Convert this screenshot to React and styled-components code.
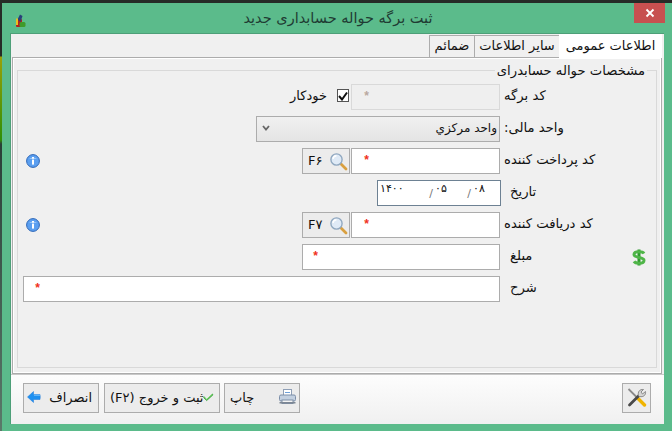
import React from 'react';
import styled, { createGlobalStyle } from 'styled-components';

const FONT = `"DejaVu Sans", "Noto Sans", sans-serif`;

const Global = createGlobalStyle`
  html, body { margin: 0; padding: 0; width: 672px; height: 431px; overflow: hidden; }
  body {
    background: linear-gradient(180deg, #262b27 0 56px, #9aa008 57px, #2f8f08 140px, #2a3f38 144px, #5a7a6a 100%);
    font-family: ${FONT};
  }
  * { box-sizing: border-box; }
`;

const Win = styled.div`
  margin: 3px 0 0 2px; width: 670px; height: 428px; background: #5bbb8b;
  display: flex; flex-direction: column; padding: 0 8px 7px 8px;
`;
const TitleBar = styled.div`
  height: 30px; flex: none; display: grid; grid-template-columns: 40px 1fr 40px; align-items: center; position: relative;
`;
const IconSlot = styled.div`
  display: flex; align-items: center; padding: 5px 0 0 5px;
`;
const Title = styled.div`
  text-align: center; direction: rtl; font-size: 14.5px; color: #1f3b33; padding-bottom: 1px; margin-left: 2px; white-space: nowrap;
`;
const Close = styled.div`
  position: absolute; right: -1px; top: 0; width: 31px; height: 20px; background: #c75050; color: #fff;
  display: flex; align-items: center; justify-content: center;
`;
const Client = styled.div`
  flex: 1; background: #f0f0f0; border-top: 1px solid #4d9f78; border-left: 1px solid #4d9f78;
  display: flex; flex-direction: column; min-height: 0;
`;
const TabArea = styled.div`
  padding: 0 2px 0 1px; flex: none; height: 340px; display: flex; flex-direction: column;
`;
const TabStrip = styled.div`
  height: 23px; flex: none; display: flex; direction: rtl; align-items: flex-end;
`;
const Tab = styled.div`
  height: ${p => (p.$active ? 24 : 22)}px; width: ${p => p.$width}px; margin-bottom: ${p => (p.$active ? -1 : 0)}px;
  background: ${p => (p.$active ? '#ffffff' : '#f0f0f0')}; position: relative; z-index: ${p => (p.$active ? 2 : 1)};
  border: 1px solid ${p => (p.$active ? '#ffffff' : '#acacac')}; border-bottom: none; border-right-width: ${p => (p.$active ? 1 : 0)}px;
  font-size: 13px; color: #111; display: flex; align-items: center; justify-content: center; white-space: nowrap; padding-bottom: 3px;
`;
const TabBody = styled.div`
  flex: 1; background: #f0f0f0; border: 1px solid #acacac; box-shadow: inset 0 0 0 1px #fff;
  padding: 12px 4px 5px 4px; min-height: 0; display: flex; position: relative;
`;
const Group = styled.div`
  flex: 1; border: 1px solid #d9d9d9; position: relative; padding-top: 13px;
  display: flex; flex-direction: column; gap: 6px;
`;
const Legend = styled.div`
  position: absolute; top: -8px; right: 9px; background: #f0f0f0; padding: 0 2px; direction: rtl;
  font-size: 13.2px; line-height: 15px; color: #111; white-space: nowrap;
`;
const Row = styled.div`
  height: 26px; flex: none; display: grid; grid-template-columns: 5px 477px 156px 1fr; align-items: center; position: relative;
`;
const Fields = styled.div`
  grid-column: 2; display: flex; justify-content: flex-end; align-items: stretch; height: 26px; gap: 1px;
`;
const Label = styled.div`
  grid-column: 3; direction: rtl; text-align: left; padding-left: ${p => p.$pad || 4}px; font-size: 13.2px; color: #111;
  white-space: nowrap; padding-bottom: 4px;
`;
const Input = styled.div`
  width: ${p => p.$w}px; height: 26px; background: ${p => (p.$off ? '#efefef' : '#ffffff')};
  border: 1px solid ${p => (p.$off ? '#d9d9d9' : '#acacac')}; direction: rtl; display: flex; align-items: center;
  padding-right: ${p => p.$star}px; position: relative;
`;
const Star = styled.span`
  color: ${p => (p.$off ? '#b9a8a0' : '#f03020')}; font: bold 12px "Liberation Sans", sans-serif; line-height: 12px; margin-top: -2px;
`;
const Select = styled.div`
  width: 244px; height: 26px; background: linear-gradient(180deg, #f0f0f0, #e4e4e4); border: 1px solid #acacac;
  display: flex; align-items: center; justify-content: space-between; padding: 0 2px 3px 5px; font-size: 12px; color: #111;
`;
const SelectText = styled.span`direction: rtl;`;
const LookupBtn = styled.div`
  width: 48px; height: 26px; background: #ececec; border: 1px solid #acacac; display: flex; align-items: center;
  justify-content: space-between; padding: 0 1px 0 5px; font-size: 13px; color: #111;
`;
const KeyText = styled.span`padding-bottom: 2px;`;
const AutoWrap = styled.div`
  display: flex; align-items: center; gap: 10px; margin-right: 1px; direction: rtl; font-size: 13px; color: #111; padding-bottom: 3px;
`;
const Box = styled.div`
  width: 12px; height: 13px; border: 1px solid #555; background: #fff; display: flex; align-items: center; justify-content: center;
`;
const DateBox = styled.div`
  width: 124px; height: 26px; background: #fff; border: 1px solid #6d8193; font-size: 11px; color: #111;
  display: grid; grid-template-columns: 47px 8px 30px 8px 1fr; padding: 1px 0 0 2px; line-height: 14px; direction: ltr;
  margin-right: -1px;
`;
const DatePart = styled.span`text-align: left;`;
const Sep = styled.span`color: #777; font-size: 11px; padding-top: 5px; text-align: center;`;
const Side = styled.div`
  display: flex; align-items: center; justify-content: center;
`;
const InfoSlot = styled(Side)`
  position: absolute; left: 8px; top: 6px; width: 14px; height: 15px;
`;
const MoneySlot = styled(Side)`
  position: absolute; left: 614px; top: 5px; width: 14px; height: 17px;
`;
const Footer = styled.div`
  flex: 1; background: linear-gradient(180deg, #fdfdfd, #f0f0f0); border-top: 1px solid #c9c9c9;
  display: flex; align-items: flex-start; padding: 8px 13px 0 12px; gap: 4px;
`;
const Btn = styled.div`
  width: ${p => p.$w}px; height: 30px; background: #ececec; border: 1px solid #acacac; font-size: 13px; color: #111;
  display: flex; align-items: center; justify-content: ${p => p.$justify || 'space-between'};
  padding: 0 ${p => p.$padR ?? 5}px 2px ${p => p.$padL ?? 5}px; white-space: nowrap; margin-left: ${p => p.$ml || 0}px;
`;
const BtnText = styled.span`direction: rtl;`;
const Spacer = styled.div`flex: 1;`;

const Lens = () => (
  <svg width="19" height="19" viewBox="0 0 19 19">
    <line x1="11.5" y1="11.5" x2="17" y2="17" stroke="#d9a040" strokeWidth="2.8" strokeLinecap="round" />
    <circle cx="7.5" cy="7.5" r="5.6" fill="#dfeaf6" stroke="#90a8c0" strokeWidth="1.4" />
    <path d="M4 7 A3.6 3.6 0 0 1 7.5 3.8" fill="none" stroke="#fff" strokeWidth="1.4" />
  </svg>
);
const Info = () => (
  <svg width="14" height="15" viewBox="0 0 14 15">
    <circle cx="7" cy="7" r="6.4" fill="#5b9ff0" stroke="#2f68b8" strokeWidth="1" />
    <path d="M3 5 A5 4 0 0 1 11 5 Z" fill="#9cc8f8" />
    <rect x="6" y="3" width="2" height="1.6" fill="#fff" />
    <rect x="6" y="5.6" width="2" height="5" fill="#fff" />
  </svg>
);
const Dollar = () => (
  <svg width="14" height="17" viewBox="0 0 14 17">
    <path d="M7 0.5v16" stroke="#2f9a2f" strokeWidth="3" />
    <path d="M12 4.5 C11 3 9 2.8 7 2.8 C4 2.8 2 3.6 2 5.6 C2 9.4 12 7.4 12 11.2 C12 13.2 10 14.2 7 14.2 C5 14.2 3 14 2 12.4" fill="none" stroke="#4fb548" strokeWidth="3" />
  </svg>
);
const Printer = () => (
  <svg width="17" height="16" viewBox="0 0 17 16">
    <rect x="4.5" y="0.5" width="8" height="6" fill="#fff" stroke="#8f9fb6" />
    <rect x="0.5" y="6" width="16" height="6" rx="1.5" fill="#c3d0e0" stroke="#7d8fa9" />
    <rect x="3" y="11" width="11" height="3.5" fill="#f5f5f5" stroke="#7f8fa6" />
    <rect x="0.5" y="13" width="16" height="1.5" fill="#7d8794" />
    <rect x="6" y="3" width="5" height="1" fill="#6fa0d8" />
  </svg>
);
const Check = () => (
  <svg width="16" height="12" viewBox="0 0 16 12">
    <path d="M1.5 5.5 L5.5 10 L14.5 1.5 L15 3 L5.5 11.5 L1 7 Z" fill="#3fa83f" stroke="#3fa83f" strokeWidth="1.2" />
    <path d="M2 6 L5.5 9.4 L14 2" fill="none" stroke="#86e076" strokeWidth="1.2" />
  </svg>
);
const BackArrow = () => (
  <svg width="14" height="12" viewBox="0 0 14 12">
    <path d="M0.5 6 L6.5 0.5 V3.5 H13 Q13.5 6 13 8.5 H6.5 V11.5 Z" fill="#1e90f0" stroke="#1e78d8" strokeWidth="0.5" />
    <path d="M7 4.2 H13" stroke="#7cc2fa" strokeWidth="1" />
  </svg>
);
const Tools = () => (
  <svg width="20" height="19" viewBox="0 0 20 19">
    <path d="M1.5 1 L10 9.5" stroke="#8a8a8a" strokeWidth="1.8" />
    <path d="M10.5 10 L17.5 17" stroke="#f0b400" strokeWidth="3.4" strokeLinecap="round" />
    <path d="M2.5 17 L12 7.5" stroke="#4a4a4a" strokeWidth="2.8" strokeLinecap="round" />
    <path d="M11.5 8 C10.5 4 12.5 1 16.5 1.5 L14 4 L15.5 6 L18.5 3.5 C19 7 16.5 9.5 12.5 8.5" fill="#d5d5d5" stroke="#808080" strokeWidth="0.9" />
  </svg>
);
const AppIcon = () => (
  <svg width="11" height="14" viewBox="0 0 11 14">
    <rect x="1" y="5" width="6" height="8" rx="1" fill="#b31f1f" />
    <rect x="4.5" y="8" width="6" height="5" rx="1.5" fill="#3f9a2a" />
    <path d="M2.5 5.5 L5 0.5 L7.5 2 L5.5 8 Z" fill="#2a3f7a" />
    <rect x="1" y="4.5" width="2" height="6.5" fill="#e8c020" />
  </svg>
);
const CloseX = () => (
  <svg width="10" height="10" viewBox="0 0 10 10">
    <path d="M1.5 1.5 L8.5 8.5 M8.5 1.5 L1.5 8.5" stroke="#fff" strokeWidth="1.8" />
  </svg>
);
const Tick = () => (
  <svg width="10" height="10" viewBox="0 0 10 10">
    <path d="M1 5 L4 8.5 L9 1.5" fill="none" stroke="#111" strokeWidth="2" />
  </svg>
);
const Chevron = () => (
  <svg width="8" height="6" viewBox="0 0 8 6">
    <path d="M1 1 L4 4.5 L7 1" fill="none" stroke="#666" strokeWidth="1.8" />
  </svg>
);

export default function App() {
  return (
    <>
      <Global />
      <Win>
        <TitleBar>
          <IconSlot><AppIcon /></IconSlot>
          <Title>ثبت برگه حواله حسابداری جدید</Title>
          <Close><CloseX /></Close>
        </TitleBar>
        <Client>
          <TabArea>
            <TabStrip>
              <Tab $active $width={103}>اطلاعات عمومی</Tab>
              <Tab $width={85}>سایر اطلاعات</Tab>
              <Tab $width={45}>ضمائم</Tab>
            </TabStrip>
            <TabBody>
              <Group>
                <Legend>مشخصات حواله حسابدرای</Legend>
                <Row>
                  <Fields>
                    <AutoWrap>
                      <Box><Tick /></Box>
                      <span>خودکار</span>
                    </AutoWrap>
                    <Input $w={149} $off $star={130}><Star $off>*</Star></Input>
                  </Fields>
                  <Label>کد برگه</Label>
                </Row>
                <Row>
                  <Fields>
                    <Select>
                      <Chevron />
                      <SelectText>واحد مرکزي</SelectText>
                    </Select>
                  </Fields>
                  <Label>واحد مالی:</Label>
                </Row>
                <Row>
                  <InfoSlot><Info /></InfoSlot>
                  <Fields>
                    <LookupBtn><KeyText>F۶</KeyText><Lens /></LookupBtn>
                    <Input $w={149} $star={130}><Star>*</Star></Input>
                  </Fields>
                  <Label>کد پرداخت کننده</Label>
                </Row>
                <Row>
                  <Fields>
                    <DateBox>
                      <DatePart>۱۴۰۰</DatePart>
                      <Sep>/</Sep>
                      <DatePart>۰۵</DatePart>
                      <Sep>/</Sep>
                      <DatePart>۰۸</DatePart>
                    </DateBox>
                  </Fields>
                  <Label $pad={10}>تاریخ</Label>
                </Row>
                <Row>
                  <InfoSlot><Info /></InfoSlot>
                  <Fields>
                    <LookupBtn><KeyText>F۷</KeyText><Lens /></LookupBtn>
                    <Input $w={149} $star={130}><Star>*</Star></Input>
                  </Fields>
                  <Label>کد دریافت کننده</Label>
                </Row>
                <Row>
                  <MoneySlot><Dollar /></MoneySlot>
                  <Fields>
                    <Input $w={198} $star={181}><Star>*</Star></Input>
                  </Fields>
                  <Label $pad={10}>مبلغ</Label>
                </Row>
                <Row>
                  <Fields>
                    <Input $w={477} $star={459}><Star>*</Star></Input>
                  </Fields>
                  <Label $pad={10}>شرح</Label>
                </Row>
              </Group>
            </TabBody>
          </TabArea>
          <Footer>
            <Btn $w={76} $padL={3} $padR={6}><BackArrow /><BtnText>انصراف</BtnText></Btn>
            <Btn $w={116} $ml={1} $justify="flex-start"><BtnText dir="rtl">ثبت و خروج (F۲)</BtnText><Check /></Btn>
            <Btn $w={76} $padR={3}><BtnText>چاپ</BtnText><Printer /></Btn>
            <Spacer />
            <Btn $w={29} $padL={2} $padR={2} $justify="center"><Tools /></Btn>
          </Footer>
        </Client>
      </Win>
    </>
  );
}
